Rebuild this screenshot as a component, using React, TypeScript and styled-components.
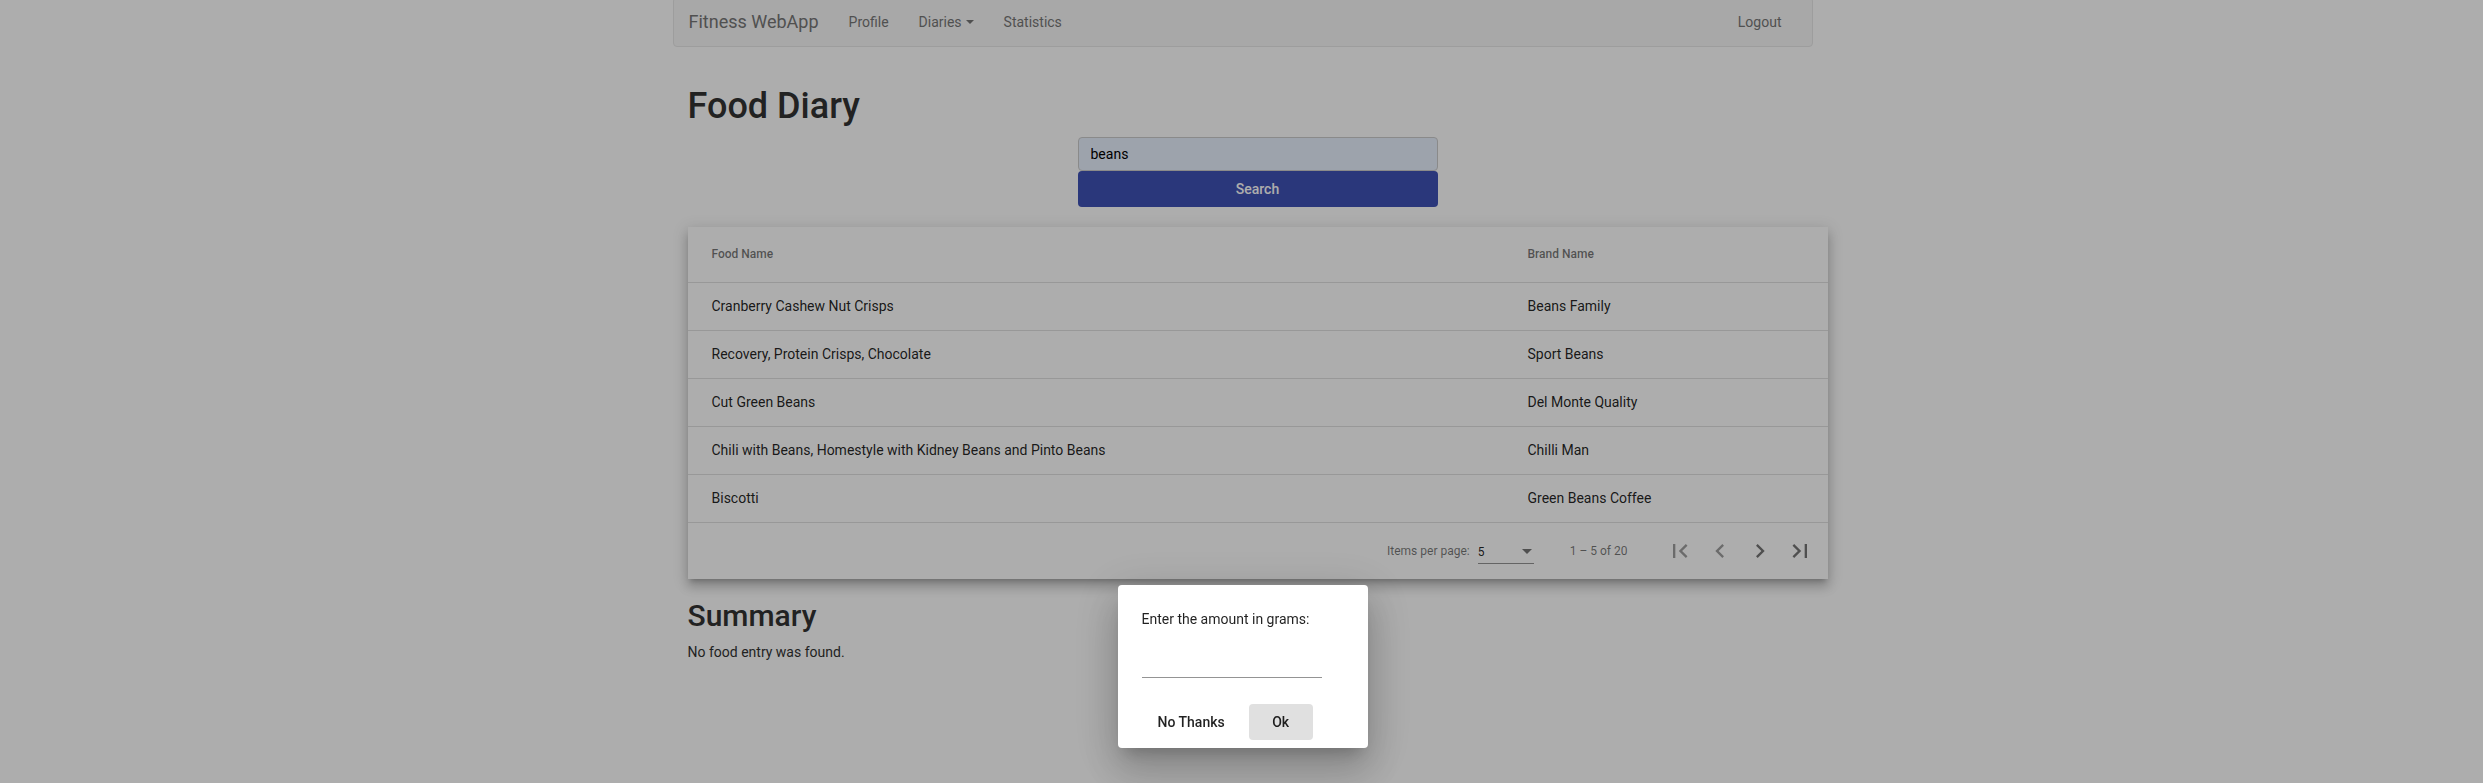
import React from 'react';
import styled, { createGlobalStyle } from 'styled-components';

const GlobalStyle = createGlobalStyle`
  html, body {
    margin: 0;
    padding: 0;
    background: #fff;
    font-family: Roboto, "Helvetica Neue", Arial, sans-serif;
    font-size: 14px;
    line-height: 20px;
    color: #333;
  }
  * { box-sizing: border-box; }
`;

const Page = styled.div`
  width: 1172px;
  margin: 0 auto;
`;

const NavBar = styled.nav`
  display: flex;
  align-items: center;
  height: 50px;
  margin: -3px 15px 0 17px;
  padding-right: 15px;
  background: #f8f8f8;
  border: 1px solid #e7e7e7;
  border-radius: 4px;
`;

const Brand = styled.a`
  padding: 0 15px;
  font-size: 18px;
  line-height: 20px;
  color: #777;
  text-decoration: none;
`;

const NavLink = styled.a<{ $right?: boolean }>`
  display: flex;
  align-items: center;
  padding: 0 15px;
  margin-left: ${(p) => (p.$right ? 'auto' : '0')};
  font-size: 14px;
  line-height: 20px;
  color: #777;
  text-decoration: none;
`;

const Caret = styled.span`
  display: inline-block;
  width: 0;
  height: 0;
  margin-left: 4px;
  border-top: 4px solid #777;
  border-left: 4px solid transparent;
  border-right: 4px solid transparent;
`;

const Main = styled.main`
  width: 1140px;
  margin-left: 32px;
  padding-top: 20px;
`;

const Title = styled.h1`
  margin: 20px 0 10px;
  font-size: 36px;
  font-weight: 500;
  line-height: 1.1;
  color: #333;
`;

const SubTitle = styled.h2`
  margin: 20px 0 10px;
  font-size: 30px;
  font-weight: 500;
  line-height: 1.1;
  color: #333;
`;

const Text = styled.p`
  margin: 0;
  font-size: 14px;
  line-height: 20px;
  color: #333;
`;

const SearchForm = styled.form`
  display: flex;
  flex-direction: column;
  width: 360px;
  margin: 0 auto;
`;

const SearchInput = styled.input`
  height: 34px;
  padding: 0 12px;
  border: 1px solid #ccc;
  border-radius: 4px;
  background: #e8f0fe;
  font-family: Roboto, sans-serif;
  font-size: 14px;
  color: #000;
  outline: none;
`;

const SearchButton = styled.button`
  height: 36px;
  border: none;
  border-radius: 4px;
  background: #3f51b5;
  color: #fff;
  font-family: Roboto, sans-serif;
  font-size: 14px;
  font-weight: 500;
`;

const TableCard = styled.div`
  margin-top: 20px;
  background: #fff;
  box-shadow: 0 5px 5px -3px rgba(0, 0, 0, 0.2), 0 8px 10px 1px rgba(0, 0, 0, 0.14),
    0 3px 14px 2px rgba(0, 0, 0, 0.12);
`;

const Row = styled.div<{ $header?: boolean }>`
  display: grid;
  grid-template-columns: 816px 1fr;
  align-items: center;
  height: ${(p) => (p.$header ? '56px' : '48px')};
  padding: 0 24px;
  border-bottom: 1px solid rgba(0, 0, 0, 0.12);
  font-size: ${(p) => (p.$header ? '12px' : '14px')};
  font-weight: ${(p) => (p.$header ? 500 : 400)};
  color: ${(p) => (p.$header ? 'rgba(0,0,0,0.54)' : 'rgba(0,0,0,0.87)')};
`;

const Paginator = styled.div`
  display: flex;
  justify-content: flex-end;
  align-items: center;
  height: 56px;
  padding: 0 8px;
  font-size: 12px;
  color: rgba(0, 0, 0, 0.54);
`;

const PageSizeLabel = styled.span`
  margin: 0 4px;
`;

const SelectBox = styled.div`
  display: flex;
  align-items: center;
  justify-content: space-between;
  width: 56px;
  height: 23px;
  margin: 3px 4px 0;
  border-bottom: 1px solid rgba(0, 0, 0, 0.42);
  color: rgba(0, 0, 0, 0.87);
`;

const SelectArrow = styled.span`
  width: 0;
  height: 0;
  margin-right: 2px;
  border-top: 5px solid rgba(0, 0, 0, 0.54);
  border-left: 5px solid transparent;
  border-right: 5px solid transparent;
`;

const RangeLabel = styled.span`
  margin: 0 32px 0 32px;
`;

const IconButton = styled.button<{ $disabled?: boolean }>`
  display: flex;
  align-items: center;
  justify-content: center;
  width: 40px;
  height: 40px;
  padding: 0;
  border: none;
  background: transparent;
  color: ${(p) => (p.$disabled ? 'rgba(0,0,0,0.38)' : 'rgba(0,0,0,0.54)')};
`;

const Backdrop = styled.div`
  position: fixed;
  inset: 0;
  background: rgba(0, 0, 0, 0.32);
  z-index: 1;
`;

const Dialog = styled.div`
  position: fixed;
  top: 585px;
  left: 50%;
  margin-left: -124px;
  width: 250px;
  padding: 24px 24px 0;
  background: #fff;
  border-radius: 4px;
  z-index: 2;
  box-shadow: 0 11px 15px -7px rgba(0, 0, 0, 0.2), 0 24px 38px 3px rgba(0, 0, 0, 0.14),
    0 9px 46px 8px rgba(0, 0, 0, 0.12);
  color: rgba(0, 0, 0, 0.87);
`;

const DialogText = styled.p`
  margin: 0;
  font-size: 14px;
  line-height: 20px;
`;

const Field = styled.input`
  display: block;
  width: 180px;
  height: 35px;
  margin: 14px 0 18px;
  padding: 0;
  border: none;
  border-bottom: 1px solid rgba(0, 0, 0, 0.42);
  background: transparent;
  font-family: Roboto, sans-serif;
  font-size: 14px;
  outline: none;
`;

const Actions = styled.div`
  display: flex;
  align-items: center;
  min-height: 52px;
  padding: 8px 0;
`;

const DialogButton = styled.button<{ $filled?: boolean }>`
  min-width: 64px;
  height: 36px;
  margin-left: ${(p) => (p.$filled ? '8px' : '0')};
  padding: 0 16px;
  border: none;
  border-radius: 4px;
  background: ${(p) => (p.$filled ? '#e0e0e0' : 'transparent')};
  font-family: Roboto, sans-serif;
  font-size: 14px;
  font-weight: 500;
  color: rgba(0, 0, 0, 0.87);
`;

const foods = [
  ['Cranberry Cashew Nut Crisps', 'Beans Family'],
  ['Recovery, Protein Crisps, Chocolate', 'Sport Beans'],
  ['Cut Green Beans', 'Del Monte Quality'],
  ['Chili with Beans, Homestyle with Kidney Beans and Pinto Beans', 'Chilli Man'],
  ['Biscotti', 'Green Beans Coffee'],
];

const Icon = ({ d }: { d: string }) => (
  <svg width="28" height="28" viewBox="0 0 24 24" fill="currentColor">
    <path d={d} />
  </svg>
);

export default function App() {
  return (
    <>
      <GlobalStyle />
      <Page>
        <NavBar>
          <Brand>Fitness WebApp</Brand>
          <NavLink>Profile</NavLink>
          <NavLink>
            Diaries
            <Caret />
          </NavLink>
          <NavLink>Statistics</NavLink>
          <NavLink $right>Logout</NavLink>
        </NavBar>

        <Main>
          <Title>Food Diary</Title>
          <SearchForm onSubmit={(e) => e.preventDefault()}>
            <SearchInput defaultValue="beans" />
            <SearchButton type="submit">Search</SearchButton>
          </SearchForm>

          <TableCard>
            <Row $header>
              <span>Food Name</span>
              <span>Brand Name</span>
            </Row>
            {foods.map(([food, brand]) => (
              <Row key={food}>
                <span>{food}</span>
                <span>{brand}</span>
              </Row>
            ))}
            <Paginator>
              <PageSizeLabel>Items per page:</PageSizeLabel>
              <SelectBox>
                <span>5</span>
                <SelectArrow />
              </SelectBox>
              <RangeLabel>1 – 5 of 20</RangeLabel>
              <IconButton $disabled>
                <Icon d="M18.41 16.59L13.82 12l4.59-4.59L17 6l-6 6 6 6zM6 6h2v12H6z" />
              </IconButton>
              <IconButton $disabled>
                <Icon d="M15.41 7.41L14 6l-6 6 6 6 1.41-1.41L10.83 12z" />
              </IconButton>
              <IconButton>
                <Icon d="M10 6L8.59 7.41 13.17 12l-4.58 4.59L10 18l6-6z" />
              </IconButton>
              <IconButton>
                <Icon d="M5.59 7.41L10.18 12l-4.59 4.59L7 18l6-6-6-6zM16 6h2v12h-2z" />
              </IconButton>
            </Paginator>
          </TableCard>

          <SubTitle>Summary</SubTitle>
          <Text>No food entry was found.</Text>
        </Main>
      </Page>

      <Backdrop />
      <Dialog>
        <DialogText>Enter the amount in grams:</DialogText>
        <Field />
        <Actions>
          <DialogButton>No Thanks</DialogButton>
          <DialogButton $filled>Ok</DialogButton>
        </Actions>
      </Dialog>
    </>
  );
}
